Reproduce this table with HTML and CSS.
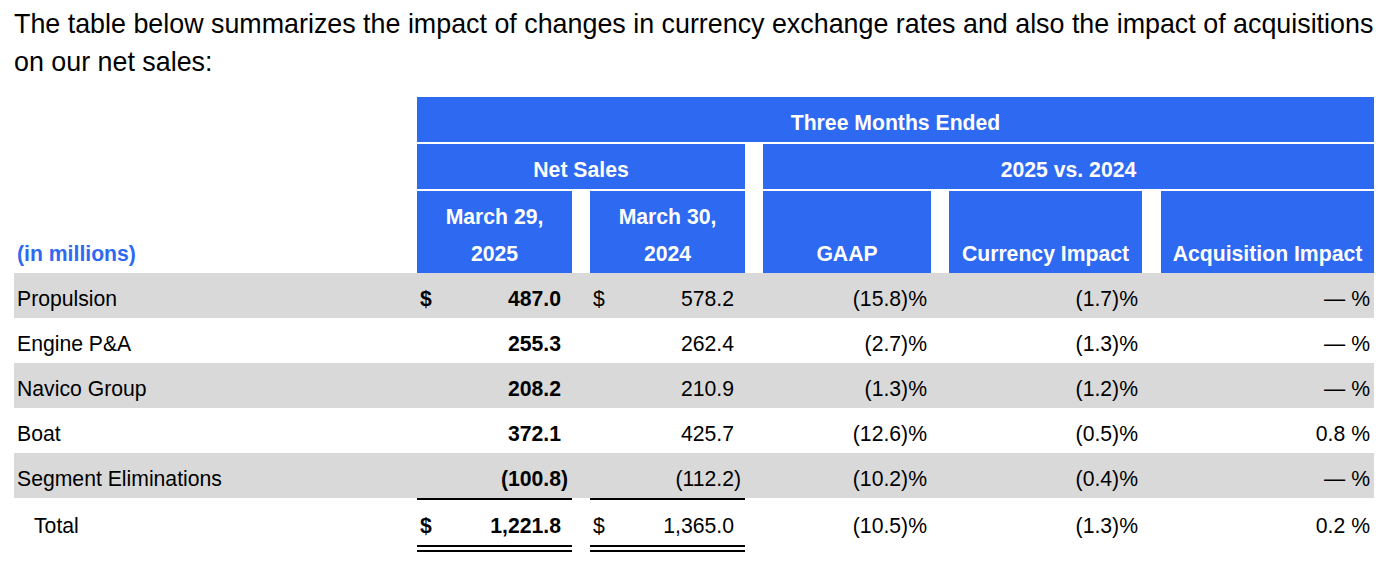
FILE: index.html
```html
<!DOCTYPE html>
<html lang="en">
<head>
<meta charset="utf-8">
<title>Net sales impact</title>
<link rel="stylesheet" href="styles.css">
</head>
<body>
<div class="page">
  <p class="intro">The table below summarizes the impact of changes in currency exchange rates and also the impact of acquisitions on our net sales:</p>
  <table class="fin">
    <colgroup>
      <col class="c-lbl">
      <col class="c-a">
      <col class="c-gap">
      <col class="c-b">
      <col class="c-gap">
      <col class="c-gaap">
      <col class="c-gap">
      <col class="c-cur">
      <col class="c-gap2">
      <col class="c-acq">
    </colgroup>
    <thead>
      <tr class="h1">
        <th class="blank"></th>
        <th class="blue" colspan="9">Three Months Ended</th>
      </tr>
      <tr class="h2">
        <th class="blank"></th>
        <th class="blue" colspan="3">Net Sales</th>
        <th class="blank"></th>
        <th class="blue" colspan="5">2025 vs. 2024</th>
      </tr>
      <tr class="h3">
        <th class="units">(in millions)</th>
        <th class="blue">March 29,<br>2025</th>
        <th class="blank"></th>
        <th class="blue">March 30,<br>2024</th>
        <th class="blank"></th>
        <th class="blue">GAAP</th>
        <th class="blank"></th>
        <th class="blue">Currency Impact</th>
        <th class="blank"></th>
        <th class="blue">Acquisition Impact</th>
      </tr>
    </thead>
    <tbody>
      <tr class="shade">
        <td class="lbl">Propulsion</td>
        <td class="num bold"><span class="cur">$</span>487.0</td>
        <td></td>
        <td class="num"><span class="cur">$</span>578.2</td>
        <td></td>
        <td class="pct">(15.8)%</td>
        <td></td>
        <td class="pct">(1.7)%</td>
        <td></td>
        <td class="pct">— %</td>
      </tr>
      <tr>
        <td class="lbl">Engine P&amp;A</td>
        <td class="num bold">255.3</td>
        <td></td>
        <td class="num">262.4</td>
        <td></td>
        <td class="pct">(2.7)%</td>
        <td></td>
        <td class="pct">(1.3)%</td>
        <td></td>
        <td class="pct">— %</td>
      </tr>
      <tr class="shade">
        <td class="lbl">Navico Group</td>
        <td class="num bold">208.2</td>
        <td></td>
        <td class="num">210.9</td>
        <td></td>
        <td class="pct">(1.3)%</td>
        <td></td>
        <td class="pct">(1.2)%</td>
        <td></td>
        <td class="pct">— %</td>
      </tr>
      <tr>
        <td class="lbl">Boat</td>
        <td class="num bold">372.1</td>
        <td></td>
        <td class="num">425.7</td>
        <td></td>
        <td class="pct">(12.6)%</td>
        <td></td>
        <td class="pct">(0.5)%</td>
        <td></td>
        <td class="pct">0.8 %</td>
      </tr>
      <tr class="shade">
        <td class="lbl">Segment Eliminations</td>
        <td class="num bold">(100.8<span class="rp">)</span></td>
        <td></td>
        <td class="num">(112.2<span class="rp">)</span></td>
        <td></td>
        <td class="pct">(10.2)%</td>
        <td></td>
        <td class="pct">(0.4)%</td>
        <td></td>
        <td class="pct">— %</td>
      </tr>
      <tr class="total">
        <td class="lbl indent">Total</td>
        <td class="num bold ul"><span class="cur">$</span>1,221.8</td>
        <td></td>
        <td class="num ul"><span class="cur">$</span>1,365.0</td>
        <td></td>
        <td class="pct">(10.5)%</td>
        <td></td>
        <td class="pct">(1.3)%</td>
        <td></td>
        <td class="pct">0.2 %</td>
      </tr>
    </tbody>
  </table>
</div>
</body>
</html>
```

FILE: styles.css
```css
html, body {
  margin: 0;
  padding: 0;
  background: #ffffff;
}

.page {
  padding: 5px 14px 0 14px;
  width: 1368px;
  font-family: "Liberation Sans", Arial, Helvetica, sans-serif;
  color: #000000;
}

.intro {
  margin: 0;
  font-size: 26.85px;
  line-height: 38px;
}

.fin {
  margin-top: 16px;
  width: 1360px;
  table-layout: fixed;
  border-collapse: separate;
  border-spacing: 0;
  font-size: 21.2px;
  line-height: 37px;
}

.c-lbl { width: 403px; }
.c-a { width: 155px; }
.c-b { width: 155px; }
.c-gap { width: 18px; }
.c-gap2 { width: 19px; }
.c-gaap { width: 168px; }
.c-cur { width: 193px; }
.c-acq { width: 213px; }

.fin th,
.fin td {
  padding: 7px 0 1px 0;
  font-weight: normal;
}

.fin th {
  text-align: center;
  font-weight: bold;
}

.h1 th,
.h2 th {
  border-bottom: 2px solid #ffffff;
}

.h3 th {
  vertical-align: bottom;
}

.fin th.blue {
  background: #2e69f2;
  color: #ffffff;
}

.fin th.blank {
  background: #ffffff;
}

.fin th.units {
  text-align: left;
  padding-left: 3px;
  color: #2e69f2;
}

.fin td {
  vertical-align: baseline;
  white-space: nowrap;
}

.shade td {
  background: #d9d9d9;
}

.lbl {
  text-align: left;
  padding-left: 3px !important;
}

.lbl.indent {
  padding-left: 20px !important;
}

.num {
  text-align: right;
  padding-left: 3px !important;
  padding-right: 11px !important;
}

.bold {
  font-weight: bold !important;
}

.cur {
  float: left;
}

.rp {
  margin-right: -0.333em;
}

.pct {
  text-align: right;
  padding-right: 4px !important;
}

.total td {
  border-top: 2px solid transparent;
  border-bottom: 7px solid transparent;
}

.total td.ul {
  border-top: 2px solid #000000;
  border-bottom: 7px double #000000;
}
```
